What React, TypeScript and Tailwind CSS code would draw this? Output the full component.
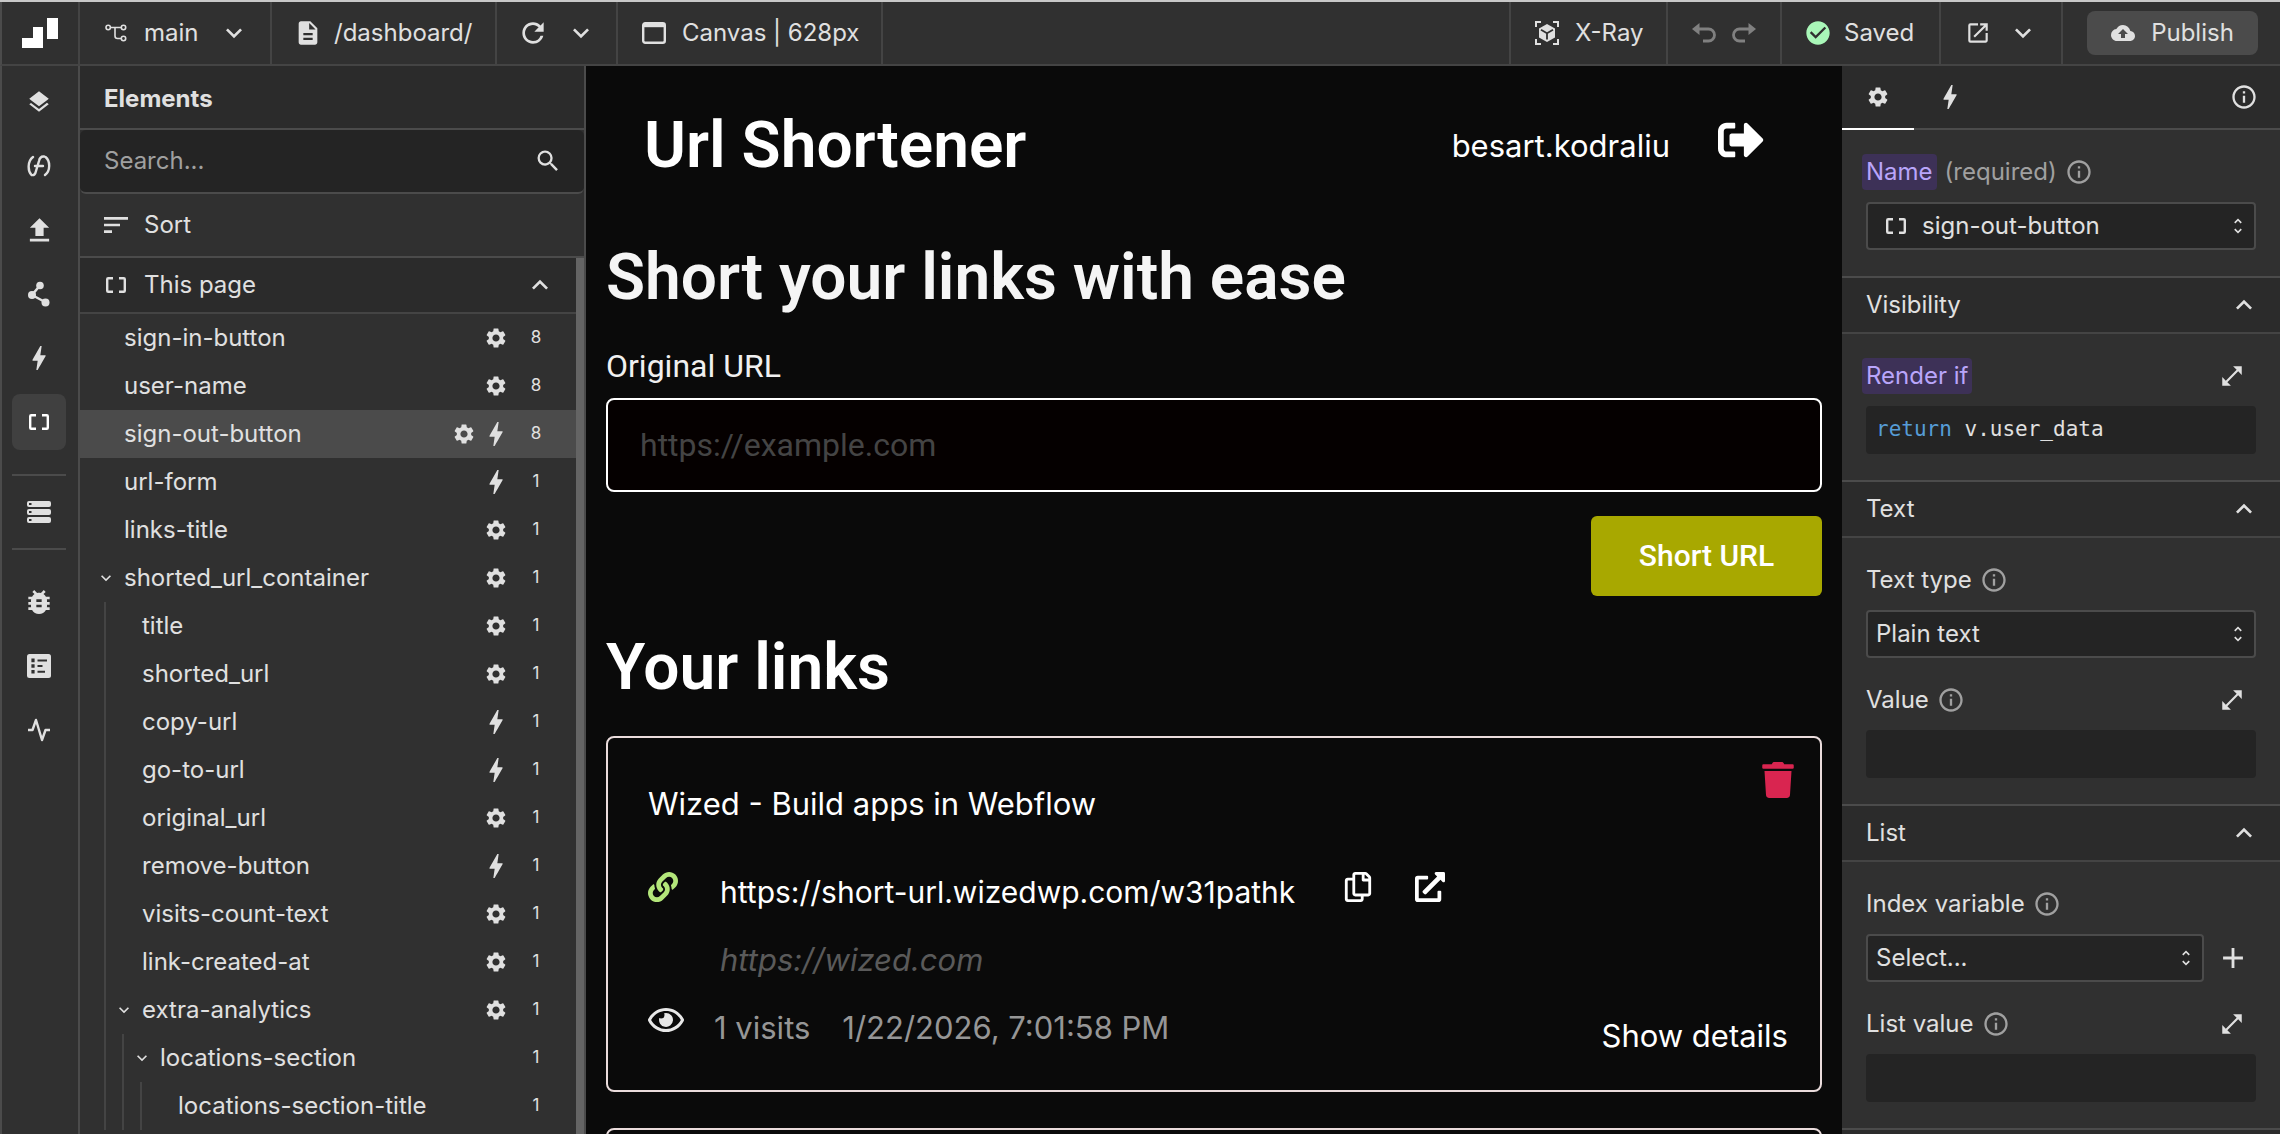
import { useState, type ReactNode } from "react";
import {
  MdAdd,
  MdBolt,
  MdBugReport,
  MdCheckCircle,
  MdCloudUpload,
  MdDescription,
  MdFileUpload,
  MdInfoOutline,
  MdKeyboardArrowDown,
  MdKeyboardArrowUp,
  MdLayers,
  MdOpenInFull,
  MdOpenInNew,
  MdRefresh,
  MdSearch,
  MdSettings,
  MdSort,
  MdUnfoldMore,
} from "react-icons/md";
import { FaExternalLinkAlt, FaLink, FaRegCopy, FaRegEye, FaSignOutAlt, FaTrash } from "react-icons/fa";

type Element = {
  name: string;
  count: number;
  depth?: number;
  open?: boolean;
  gear?: boolean;
  bolt?: boolean;
};

const elements: Element[] = [
  { name: "sign-in-button", count: 8, gear: true },
  { name: "user-name", count: 8, gear: true },
  { name: "sign-out-button", count: 8, gear: true, bolt: true },
  { name: "url-form", count: 1, bolt: true },
  { name: "links-title", count: 1, gear: true },
  { name: "shorted_url_container", count: 1, gear: true, open: true },
  { name: "title", count: 1, depth: 1, gear: true },
  { name: "shorted_url", count: 1, depth: 1, gear: true },
  { name: "copy-url", count: 1, depth: 1, bolt: true },
  { name: "go-to-url", count: 1, depth: 1, bolt: true },
  { name: "original_url", count: 1, depth: 1, gear: true },
  { name: "remove-button", count: 1, depth: 1, bolt: true },
  { name: "visits-count-text", count: 1, depth: 1, gear: true },
  { name: "link-created-at", count: 1, depth: 1, gear: true },
  { name: "extra-analytics", count: 1, depth: 1, gear: true, open: true },
  { name: "locations-section", count: 1, depth: 2, open: true },
  { name: "locations-section-title", count: 1, depth: 3 },
];

export default function App() {
  return (
    <div className="flex h-screen flex-col overflow-hidden border-t-2 border-[#c8c8c8] bg-[#303030] font-['Inter',sans-serif] text-[24px] text-[#e0e0e0]">
      <TopBar />
      <div className="flex min-h-0 flex-1 border-l-2 border-[#4b4b4b]">
        <Rail />
        <ElementsPanel />
        <Canvas />
        <Inspector />
      </div>
    </div>
  );
}

const TopBar = () => {
  return (
    <header className="flex h-16 shrink-0 border-b-2 border-l-2 border-[#444444] border-l-[#4b4b4b]">
      <a href="#home" aria-label="Home" className="flex w-[78px] items-center justify-center border-r-2 border-[#444444]">
        <svg width="36" height="30" viewBox="0 0 36 30" fill="#fff">
          <path d="M0 20h11V9h10v21H0zM25 0h11v21H25z" />
        </svg>
      </a>
      <button className="flex w-48 items-center border-r-2 border-[#444444] pl-6">
        <BranchIcon />
        <span className="ml-4 flex-1 text-left">main</span>
        <MdKeyboardArrowDown size={32} className="mr-5" />
      </button>
      <button className="flex w-[225px] items-center gap-3 border-r-2 border-[#444444] pl-[22px]">
        <MdDescription size={28} />
        /dashboard/
      </button>
      <div className="flex w-[121px] items-center gap-4 border-r-2 border-[#444444] pl-5">
        <button aria-label="Refresh">
          <MdRefresh size={32} />
        </button>
        <button aria-label="Refresh options">
          <MdKeyboardArrowDown size={32} />
        </button>
      </div>
      <button className="flex w-[265px] items-center gap-4 border-r-2 border-[#444444] pl-6">
        <WindowIcon />
        Canvas | 628px
      </button>
      <div className="flex-1" />
      <button className="flex w-[157px] items-center gap-4 border-l-2 border-[#444444] pl-6">
        <XRayIcon />
        X-Ray
      </button>
      <div className="flex w-[114px] items-center gap-4 border-l-2 border-[#444444] pl-6 text-[#808080]">
        <button aria-label="Undo">
          <UndoIcon />
        </button>
        <button aria-label="Redo">
          <UndoIcon className="-scale-x-100" />
        </button>
      </div>
      <div className="flex w-[159px] items-center gap-3 border-l-2 border-[#444444] pl-[22px]">
        <MdCheckCircle size={28} className="text-[#a9f7b8]" />
        Saved
      </div>
      <div className="flex w-[122px] items-center gap-4 border-l-2 border-[#444444] pl-6">
        <button aria-label="Open preview">
          <MdOpenInNew size={26} />
        </button>
        <button aria-label="Preview options">
          <MdKeyboardArrowDown size={32} />
        </button>
      </div>
      <div className="flex items-center border-l-2 border-[#444444] pl-6 pr-[22px]">
        <button className="flex h-11 w-[171px] items-center justify-center gap-4 rounded-lg bg-[#4b4b4b]">
          <MdCloudUpload size={24} />
          Publish
        </button>
      </div>
    </header>
  );
};

const Rail = () => {
  const groups = [
    [
      { name: "Layers", icon: <MdLayers size={26} /> },
      { name: "Functions", icon: <FunctionIcon /> },
      { name: "Uploads", icon: <MdFileUpload size={33} /> },
      { name: "Requests", icon: <NodesIcon /> },
      { name: "Events", icon: <MdBolt size={32} /> },
      { name: "Elements", icon: <BracketsIcon />, active: true },
    ],
    [{ name: "Data store", icon: <StackIcon /> }],
    [
      { name: "Debugger", icon: <MdBugReport size={32} /> },
      { name: "Logs", icon: <ListIcon /> },
      { name: "Activity", icon: <PulseIcon /> },
    ],
  ];
  return (
    <nav className="w-[78px] shrink-0 border-r-2 border-[#4b4b4b] pl-2.5 pt-2">
      <RailGroup items={groups[0]} />
      <hr className="mt-6 mb-2 w-[54px] border-t-2 border-[#4b4b4b]" />
      <RailGroup items={groups[1]} />
      <hr className="mt-2 mb-6 w-[54px] border-t-2 border-[#4b4b4b]" />
      <RailGroup items={groups[2]} />
    </nav>
  );
};

const RailGroup = ({ items }: { items: { name: string; icon: ReactNode; active?: boolean }[] }) => {
  return (
    <div className="flex flex-col gap-2">
      {items.map((item) => (
        <button
          key={item.name}
          aria-label={item.name}
          className={`flex h-14 w-[54px] items-center justify-center rounded-lg ${item.active ? "bg-[#404040] text-white" : ""}`}
        >
          {item.icon}
        </button>
      ))}
    </div>
  );
};

const ElementsPanel = () => {
  const [selected, setSelected] = useState("sign-out-button");
  return (
    <aside className="flex w-[506px] shrink-0 flex-col border-r-2 border-[#4b4b4b]">
      <h2 className="flex h-16 shrink-0 items-center border-b-2 border-[#4b4b4b] bg-[#2b2b2b] pt-1 pl-6 font-bold">Elements</h2>
      <label className="flex h-16 shrink-0 items-center rounded-md border-b-2 border-[#4b4b4b] bg-[#242424] pl-6 pr-[22px]">
        <input
          type="search"
          aria-label="Search elements"
          placeholder="Search..."
          className="min-w-0 flex-1 bg-transparent outline-none placeholder:text-[#a0a0a0]"
        />
        <MdSearch size={28} />
      </label>
      <button className="flex h-16 shrink-0 items-center gap-3 border-b-2 border-[#4b4b4b] pl-5">
        <MdSort size={32} />
        Sort
      </button>
      <div className="flex min-h-0 flex-1">
        <div className="min-w-0 flex-1">
          <button className="flex h-14 w-full items-center border-b-2 border-[#444444] bg-[#2b2b2b] pl-[26px] pr-5">
            <BracketsIcon />
            <span className="ml-[18px] flex-1 text-left">This page</span>
            <MdKeyboardArrowUp size={32} />
          </button>
          <ul>
            {elements.map((item) => (
              <ElementRow
                key={item.name}
                item={item}
                selected={item.name === selected}
                onSelect={() => setSelected(item.name)}
              />
            ))}
          </ul>
        </div>
        <div className="w-2 bg-[#646464]" />
      </div>
    </aside>
  );
};

const ElementRow = ({ item, selected, onSelect }: { item: Element; selected: boolean; onSelect: () => void }) => {
  const depth = item.depth ?? 0;
  return (
    <li>
      <button onClick={onSelect} className={`flex h-12 w-full items-center pl-4 pr-7 ${selected ? "bg-[#4b4b4b]" : ""}`}>
        {Array.from({ length: depth }, (_, i) => (
          <span key={i} className="flex h-full w-[18px] pl-2">
            <span className="h-full w-0.5 bg-[#444444]" />
          </span>
        ))}
        <span className="flex w-7 items-center">{item.open && <MdKeyboardArrowDown size={20} />}</span>
        <span className="flex-1 text-left">{item.name}</span>
        {item.gear && (
          <span className="flex w-8 justify-center">
            <MdSettings size={24} />
          </span>
        )}
        {item.bolt && (
          <span className="flex w-8 justify-center">
            <MdBolt size={32} />
          </span>
        )}
        <span className="ml-3 w-6 text-center text-[17px]">{item.count}</span>
      </button>
    </li>
  );
};

const Canvas = () => {
  return (
    <main className="min-w-0 flex-1 overflow-hidden bg-[#0a0a0a] px-5 text-[31px] text-white">
      <div className="mt-[42px] flex h-[76px] items-center pl-[38px] pr-[58px]">
        <div className="flex-1 font-['Roboto',sans-serif] text-[64px] font-semibold leading-[76px]">Url Shortener</div>
        <span>besart.kodraliu</span>
        <button aria-label="Sign out" className="mb-3 ml-12">
          <FaSignOutAlt size={46} />
        </button>
      </div>
      <h1 className="mt-14 font-['Roboto',sans-serif] text-[64px] font-semibold leading-[76px] text-[#f5f5f5]">
        Short your links with ease
      </h1>
      <form className="font-['Roboto',sans-serif] text-[32px]">
        <label htmlFor="original-url" className="mt-[30px] mb-3 block leading-10 text-[#f0f0f0]">
          Original URL
        </label>
        <input
          id="original-url"
          type="url"
          placeholder="https://example.com"
          className="block h-[94px] w-full rounded-lg border-2 border-white bg-[#050000] px-8 outline-none placeholder:text-[#444444]"
        />
        <button type="button" className="mt-6 ml-auto block h-20 w-[231px] rounded-md bg-[#a8a800] pb-0.5 text-[30px] font-medium">
          Short URL
        </button>
      </form>
      <h2 className="mt-[34px] mb-[30px] font-['Roboto',sans-serif] text-[64px] font-semibold leading-[76px]">Your links</h2>
      <LinkCard />
      <div className="mt-9 h-40 rounded-lg border-2 border-[#eadcdc]" />
    </main>
  );
};

const LinkCard = () => {
  return (
    <article className="rounded-lg border-2 border-[#eadcdc] pt-6 pb-[34px] pl-10 leading-10">
      <div className="flex items-start justify-between pr-6">
        <h3 className="mt-[22px]">Wized - Build apps in Webflow</h3>
        <button aria-label="Remove link" className="text-[#d92550]">
          <FaTrash size={36} />
        </button>
      </div>
      <div className="mt-12 flex items-start">
        <FaLink size={30} className="mr-[42px] text-[#b3e67a]" />
        <a href="#w31pathk" className="text-[30px]">
          https://short-url.wizedwp.com/w31pathk
        </a>
        <button aria-label="Copy" className="ml-12">
          <FaRegCopy size={30} />
        </button>
        <button aria-label="Open link" className="ml-[42px]">
          <FaExternalLinkAlt size={30} />
        </button>
      </div>
      <p className="mt-7 pl-[72px] italic text-[#5a5a5a]">https://wized.com</p>
      <div className="mt-7 flex items-start text-[#969696]">
        <FaRegEye size={36} className="-mt-1.5 mr-[30px] text-[#e8e8e8]" />
        <span>1 visits</span>
        <time className="ml-8 flex-1">1/22/2026, 7:01:58 PM</time>
        <button className="mt-2 mr-8 text-white">Show details</button>
      </div>
    </article>
  );
};

const Inspector = () => {
  return (
    <aside className="w-[438px] shrink-0">
      <div className="flex h-16 border-b-2 border-[#4b4b4b] bg-[#2b2b2b]">
        <button aria-label="Settings" className="flex h-16 w-[72px] items-center justify-center border-b-2 border-white">
          <MdSettings size={24} />
        </button>
        <button aria-label="Events" className="flex w-[72px] items-center justify-center">
          <MdBolt size={32} />
        </button>
        <button aria-label="Help" className="ml-auto mr-[22px]">
          <MdInfoOutline size={28} />
        </button>
      </div>
      <SectionBody>
        <Field id="name" label="Name" note="(required)" info highlight>
          <Select id="name" value="sign-out-button" icon={<BracketsIcon />} />
        </Field>
      </SectionBody>
      <SectionHeader title="Visibility" />
      <SectionBody>
        <Field id="render-if" label="Render if" highlight expand>
          <div
            id="render-if"
            className="flex h-12 items-center whitespace-pre rounded bg-[#242424] px-2.5 font-['DejaVu_Sans_Mono',monospace] text-[21px]"
          >
            <span className="text-[#569cd6]">return</span> v.user_data
          </div>
        </Field>
      </SectionBody>
      <SectionHeader title="Text" />
      <SectionBody>
        <Field id="text-type" label="Text type" info>
          <Select id="text-type" value="Plain text" />
        </Field>
        <Field id="value" label="Value" info expand>
          <input id="value" className="h-12 rounded bg-[#242424] px-3 outline-none" />
        </Field>
      </SectionBody>
      <SectionHeader title="List" />
      <SectionBody>
        <Field id="index-variable" label="Index variable" info>
          <div className="flex items-center gap-3">
            <Select id="index-variable" value="Select..." />
            <button aria-label="Add variable" className="mr-1.5">
              <MdAdd size={34} />
            </button>
          </div>
        </Field>
        <Field id="list-value" label="List value" info expand>
          <input id="list-value" className="h-12 rounded bg-[#242424] px-3 outline-none" />
        </Field>
      </SectionBody>
      <div className="h-14 border-t-2 border-[#4b4b4b] bg-[#2b2b2b]" />
    </aside>
  );
};

const SectionHeader = ({ title }: { title: string }) => {
  return (
    <button className="flex h-[58px] w-full items-center justify-between border-y-2 border-[#444444] border-t-[#4b4b4b] bg-[#2b2b2b] pl-6 pr-5">
      {title}
      <MdKeyboardArrowUp size={32} />
    </button>
  );
};

const SectionBody = ({ children }: { children: ReactNode }) => {
  return <div className="flex flex-col gap-6 px-6 pt-6 pb-[26px]">{children}</div>;
};

type FieldProps = {
  id: string;
  label: string;
  note?: string;
  info?: boolean;
  highlight?: boolean;
  expand?: boolean;
  children: ReactNode;
};

const Field = ({ id, label, note, info, highlight, expand, children }: FieldProps) => {
  return (
    <div className="flex flex-col gap-3">
      <div className="flex h-9 items-center">
        <label
          htmlFor={id}
          className={highlight ? "-ml-1 flex h-9 items-center rounded bg-[#3d3157] px-1 text-[#b9a5fa]" : ""}
        >
          {label}
        </label>
        {note && <span className="ml-2 text-[#a0a0a0]">{note}</span>}
        {info && <MdInfoOutline size={28} className="ml-2 text-[#a0a0a0]" />}
        {expand && (
          <button aria-label={`Expand ${label}`} className="ml-auto mr-[11px]">
            <MdOpenInFull size={26} />
          </button>
        )}
      </div>
      {children}
    </div>
  );
};

const Select = ({ id, value, icon }: { id: string; value: string; icon?: ReactNode }) => {
  return (
    <div className="flex h-12 min-w-0 flex-1 shrink-0 basis-12 items-center rounded border-2 border-[#4b4b4b] bg-[#242424] pl-2 pr-1.5">
      {icon && <span className="mr-4 ml-2.5">{icon}</span>}
      <select id={id} className="min-w-0 flex-1 appearance-none bg-transparent outline-none">
        <option>{value}</option>
      </select>
      <MdUnfoldMore size={20} />
    </div>
  );
};

const BracketsIcon = () => (
  <svg width="20" height="16" viewBox="0 0 20 16" fill="none" stroke="currentColor" strokeWidth="2.4">
    <path d="M7 1.2H2.2Q1.2 1.2 1.2 2.2V13.8Q1.2 14.8 2.2 14.8H7M13 1.2H17.8Q18.8 1.2 18.8 2.2V13.8Q18.8 14.8 17.8 14.8H13" />
  </svg>
);

const BranchIcon = () => (
  <svg width="24" height="24" viewBox="0 0 24 24" fill="none" stroke="currentColor" strokeWidth="1.6">
    <circle cx="4.2" cy="6.5" r="2.2" />
    <circle cx="19.5" cy="6.5" r="2.2" />
    <circle cx="19.5" cy="17.5" r="2.2" />
    <path d="M6.4 6.500h10.900M11 6.500v8.500q0 2.500 2.500 2.500h3.800" />
  </svg>
);

const WindowIcon = () => (
  <svg width="24" height="22" viewBox="0 0 24 22" fill="none" stroke="currentColor" strokeWidth="2.4">
    <rect x="1.2" y="1.2" width="21.6" height="19.6" rx="2" />
    <path d="M1.5 3.2h21" strokeWidth="4" />
  </svg>
);

const XRayIcon = () => (
  <svg width="24" height="24" viewBox="0 0 24 24" fill="none" stroke="currentColor" strokeWidth="2">
    <path d="M1 6V1h5M18 1h5v5M23 18v5h-5M6 23H1v-5" />
    <path d="M12 3l8 4.500v9l-8 4.500-8-4.500v-9z" fill="currentColor" stroke="none" />
    <path d="M6 8.800l6 3.400 6-3.400M12 12v6.500" stroke="#303030" strokeWidth="1.8" />
  </svg>
);

const UndoIcon = ({ className }: { className?: string }) => (
  <svg width="24" height="20" viewBox="0 0 24 20" fill="none" stroke="currentColor" strokeWidth="2.8" className={className}>
    <path d="M5 6h11.500a6 6 0 0 1 0 12h-5.500" />
    <path d="M7.500 0v12L0 6z" fill="currentColor" stroke="none" />
  </svg>
);

const FunctionIcon = () => (
  <svg width="24" height="22" viewBox="0 0 24 22" fill="none" stroke="currentColor" strokeWidth="2.4" strokeLinecap="round">
    <path d="M6 2C.5 6 .5 16 4.500 20q3.500 1 4.500-4l3-10q1-5 5-4.500M18.500 2c5 4 5 14-.5 18M8 11h8" />
  </svg>
);

const NodesIcon = () => (
  <svg width="22" height="26" viewBox="0 0 22 26" fill="currentColor">
    <path d="M12 4.500L4 14l13 7" fill="none" stroke="currentColor" strokeWidth="2.5" />
    <circle cx="12" cy="4.5" r="3.8" />
    <circle cx="4" cy="14" r="4" />
    <circle cx="17.5" cy="21.5" r="4" />
  </svg>
);

const StackIcon = () => (
  <svg width="24" height="22" viewBox="0 0 24 22" fill="currentColor">
    <rect y="0" width="24" height="6" rx="2" />
    <rect y="8" width="24" height="6" rx="2" />
    <rect y="16" width="24" height="6" rx="2" />
    <path d="M2 3h2.500M2 11h2.500M2 19h2.500" stroke="#303030" strokeWidth="1.8" />
  </svg>
);

const ListIcon = () => (
  <svg width="24" height="24" viewBox="0 0 24 24" fill="none" stroke="#303030" strokeWidth="2">
    <rect width="24" height="24" rx="2.5" fill="currentColor" stroke="none" />
    <path d="M10.500 6.400h9.500M10.500 12h5M10.500 17.800h7.500" />
    <path d="M6 4.600v3.600M6 10.200v3.600M6 16v3.600" strokeWidth="3.2" />
  </svg>
);

const PulseIcon = () => (
  <svg width="24" height="24" viewBox="0 0 24 24" fill="none" stroke="currentColor" strokeWidth="2.4" strokeLinejoin="round">
    <path d="M1 12h4.500L9 2l6 20 3.500-10H23" />
  </svg>
);
